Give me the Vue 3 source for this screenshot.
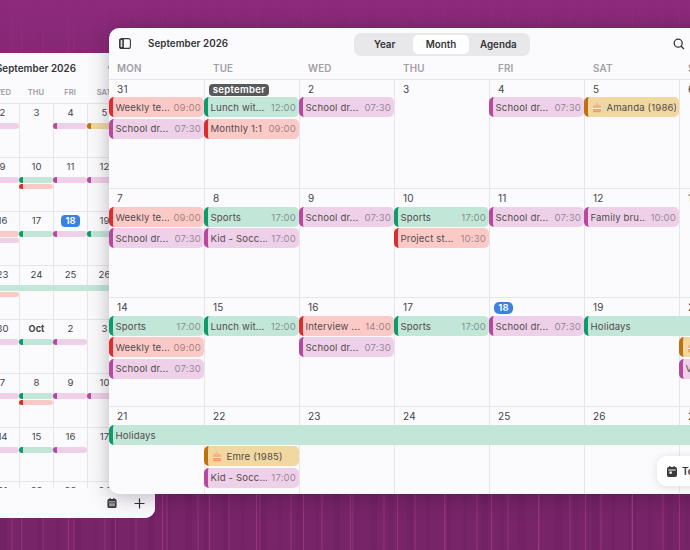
<script setup>
const R = 'red', G = 'green', P = 'pink', Y = 'yellow'
const weekdays = ['MON', 'TUE', 'WED', 'THU', 'FRI', 'SAT', 'SUN']
const weeks = [
  {
    days: ['31', 'september', '2', '3', '4', '5', '6'],
    events: [
      [1, 2, 1, R, 'Weekly te...', '09:00'], [1, 3, 1, P, 'School dr...', '07:30'],
      [2, 2, 1, G, 'Lunch wit...', '12:00'], [2, 3, 1, R, 'Monthly 1:1', '09:00'],
      [3, 2, 1, P, 'School dr...', '07:30'], [5, 2, 1, P, 'School dr...', '07:30'],
      [6, 2, 1, Y, 'Amanda (1986)', '']
    ]
  },
  {
    days: ['7', '8', '9', '10', '11', '12', '13'],
    events: [
      [1, 2, 1, R, 'Weekly te...', '09:00'], [1, 3, 1, P, 'School dr...', '07:30'],
      [2, 2, 1, G, 'Sports', '17:00'], [2, 3, 1, P, 'Kid - Socc...', '17:00'],
      [3, 2, 1, P, 'School dr...', '07:30'], [4, 2, 1, G, 'Sports', '17:00'],
      [4, 3, 1, R, 'Project st...', '10:30'], [5, 2, 1, P, 'School dr...', '07:30'],
      [6, 2, 1, P, 'Family bru...', '10:00']
    ]
  },
  {
    days: ['14', '15', '16', '17', '18', '19', '20'],
    events: [
      [1, 2, 1, G, 'Sports', '17:00'], [1, 3, 1, R, 'Weekly te...', '09:00'], [1, 4, 1, P, 'School dr...', '07:30'],
      [2, 2, 1, G, 'Lunch wit...', '12:00'], [3, 2, 1, R, 'Interview ...', '14:00'], [3, 3, 1, P, 'School dr...', '07:30'],
      [4, 2, 1, G, 'Sports', '17:00'], [5, 2, 1, P, 'School dr...', '07:30'], [6, 2, 2, G, 'Holidays', ''],
      [7, 3, 1, Y, 'Jan (1990)', ''], [7, 4, 1, P, 'Vet', '']
    ]
  },
  {
    days: ['21', '22', '23', '24', '25', '26', '27'],
    events: [
      [1, 2, 7, G, 'Holidays', ''], [2, 3, 1, Y, 'Emre (1985)', ''], [2, 4, 1, P, 'Kid - Socc...', '17:00']
    ]
  }
].map(w => ({
  days: w.days,
  events: w.events.map(([col, row, span, color, title, time]) => ({ col, row, span, color, title, time }))
}))

const miniWeeks = [
  { days: ['31', '1', '2', '3', '4', '5', '6'], bars: [[3, 2, 1, P], [5, 2, 1, P], [6, 2, 1, Y]] },
  { days: ['7', '8', '9', '10', '11', '12', '13'], bars: [[3, 2, 1, P], [4, 2, 1, G], [4, 3, 1, R], [5, 2, 1, P], [6, 2, 1, P]] },
  { days: ['14', '15', '16', '17', '18', '19', '20'], bars: [[3, 2, 1, R], [3, 3, 1, P], [4, 2, 1, G], [5, 2, 1, P], [6, 2, 2, G]] },
  { days: ['21', '22', '23', '24', '25', '26', '27'], bars: [[1, 2, 7, G, true], [3, 3, 1, R]] },
  { days: ['28', '29', '30', 'Oct', '2', '3', '4'], bars: [[3, 2, 1, P], [4, 2, 1, G], [5, 2, 1, P]] },
  { days: ['5', '6', '7', '8', '9', '10', '11'], bars: [[3, 2, 1, P], [4, 2, 1, G], [4, 3, 1, R], [5, 2, 1, P], [6, 2, 1, P]] },
  { days: ['12', '13', '14', '15', '16', '17', '18'], bars: [[3, 2, 1, P], [4, 2, 1, G], [5, 2, 1, P]] },
  { days: ['19', '20', '21', '22', '23', '24', '25'], bars: [] }
].map(w => ({
  days: w.days,
  bars: w.bars.map(([col, row, span, color, plain]) => ({ col, row, span, color, plain }))
}))
</script>

<template>
  <div class="desktop">
    <section class="win mini">
      <header class="mini-head">
        <span></span>
        <strong class="title">September 2026</strong>
        <span class="mini-tools">
          <svg width="12" height="12" viewBox="0 0 12 12" fill="none" stroke="#333" stroke-width="1.4"><circle cx="5.2" cy="5.2" r="4"/><path d="M8.2 8.2 11 11"/></svg>
        </span>
      </header>
      <div class="mini-days">
        <span v-for="d in weekdays" :key="d">{{ d }}</span>
      </div>
      <div class="mini-body">
        <div v-for="(w, i) in miniWeeks" :key="i" class="mini-week">
          <div v-for="(d, j) in w.days" :key="j" class="mini-cell" :style="{ gridColumn: j + 1 }">
            <span class="mini-num" :class="{ today: d === '18' && i === 2 && j === 4, oct: d === 'Oct' }">{{ d }}</span>
          </div>
          <i
            v-for="(b, k) in w.bars"
            :key="'b' + k"
            class="bar"
            :class="[b.color, { plain: b.plain }]"
            :style="{ gridColumn: b.col + ' / span ' + b.span, gridRow: b.row }"
          ></i>
        </div>
      </div>
      <footer class="mini-foot">
        <svg width="10" height="10" viewBox="0 0 12 12"><path fill="#3a3a3c" d="M3 0h1.4v1.2h3.2V0H9v1.2h.6A1.9 1.9 0 0 1 11.5 3v7a1.9 1.9 0 0 1-1.9 2H2.4A1.9 1.9 0 0 1 .5 10V3a1.9 1.9 0 0 1 1.9-1.8H3z"/><path fill="#fff" d="M2 4.2h8v.9H2zM3 6.4h1.2v3.4H3zM5.4 6.4h1.2v3.4H5.4zM7.8 6.4H9v3.4H7.8z"/></svg>
        <svg width="11" height="11" viewBox="0 0 11 11" stroke="#333" stroke-width="1.2"><path d="M5.5.5v10M.5 5.5h10"/></svg>
      </footer>
    </section>

    <section class="win main">
      <header class="main-head">
        <svg class="side-icon" width="12" height="11" viewBox="0 0 12 11" fill="none" stroke="#3a3a3c" stroke-width="1.1"><rect x=".6" y=".6" width="10.8" height="9.8" rx="2"/><path fill="#3a3a3c" d="M1 1.5h3v8H1z" fill-opacity=".15"/><path d="M4.3.6v9.8"/></svg>
        <strong class="title">September 2026</strong>
        <nav class="seg">
          <span class="tab year">Year</span>
          <span class="tab on">Month</span>
          <span class="tab agenda">Agenda</span>
        </nav>
        <svg class="search" width="12" height="12" viewBox="0 0 12 12" fill="none" stroke="#333" stroke-width="1.3"><circle cx="5.2" cy="5.2" r="4"/><path d="M8.2 8.2 11 11"/></svg>
      </header>
      <div class="main-days">
        <span v-for="d in weekdays" :key="d">{{ d }}</span>
      </div>
      <div v-for="(w, i) in weeks" :key="i" class="week">
        <div v-for="(d, j) in w.days" :key="j" class="cell" :style="{ gridColumn: j + 1 }">
          <span v-if="d === 'september'" class="badge month-badge">{{ d }}</span>
          <span v-else-if="d === '18'" class="badge today-badge">{{ d }}</span>
          <span v-else class="num">{{ d }}</span>
        </div>
        <div
          v-for="(e, k) in w.events"
          :key="'e' + k"
          class="event"
          :class="e.color"
          :style="{ gridColumn: e.col + ' / span ' + e.span, gridRow: e.row }"
        >
          <svg v-if="e.color === 'yellow'" class="cake" width="10" height="11" viewBox="0 0 10 11">
            <path fill="#f39a55" d="M5 .6c.6.6.6 1.2 0 1.7-.6-.5-.6-1.1 0-1.7z"/>
            <path fill="#f5b27c" d="M1 5.2a4 2.6 0 0 1 8 0v1H1z"/>
            <path fill="#fdf1df" d="M.5 5.9h9v1.2h-9z"/>
            <path fill="#f39a55" d="M1 7.1h8l-.4 2.7a.6.6 0 0 1-.6.5H2a.6.6 0 0 1-.6-.5z"/>
            <path fill="#fdf1df" d="M2.2 8.4h5.6v.6H2.2z" fill-opacity=".6"/>
          </svg>
          <span class="ev-title">{{ e.title }}</span>
          <span v-if="e.time" class="ev-time">{{ e.time }}</span>
        </div>
      </div>
      <button class="today-btn">
        <svg width="10" height="11" viewBox="0 0 10 11"><path fill="#3a3a3c" d="M2.2 0h1.2v1h3.2V0h1.2v1h.4A1.8 1.8 0 0 1 10 2.8v6.4A1.8 1.8 0 0 1 8.2 11H1.8A1.8 1.8 0 0 1 0 9.2V2.8A1.8 1.8 0 0 1 1.8 1h.4z"/><path fill="#fff" d="M1.3 3.6h7.4v.8H1.3zM2.4 5.4h2.4v2.4H2.4z"/></svg>
        Today
      </button>
    </section>
  </div>
</template>

<style scoped>
.desktop {
  position: relative;
  width: 690px;
  height: 550px;
  overflow: hidden;
  font-family: Inter, "Liberation Sans", sans-serif;
  background:
    linear-gradient(180deg, #8d2a7b 0%, rgba(141, 42, 123, .7) 9%, rgba(125, 38, 110, .1) 88%),
    repeating-linear-gradient(90deg, transparent 0 21px, rgba(226, 84, 190, .34) 21px 22px, transparent 22px 47px),
    repeating-linear-gradient(90deg, transparent 0 11px, rgba(226, 84, 190, .15) 11px 13px, transparent 13px 31px),
    repeating-linear-gradient(90deg, rgba(40, 0, 40, .07) 0 7px, transparent 7px 19px, rgba(40, 0, 40, .05) 19px 23px, transparent 23px 37px),
    #772468;
}
.win {
  position: absolute;
  background: #fbfbfd;
  overflow: hidden;
}
.main {
  left: 109px;
  top: 28px;
  width: 665px;
  height: 466px;
  border-radius: 10px;
  box-shadow: 0 3px 22px rgba(30, 0, 30, .28);
}
.mini {
  left: -83px;
  top: 53px;
  width: 238px;
  height: 465px;
  border-radius: 10px;
  display: flex;
  flex-direction: column;
}
.title {
  font-size: 9.8px;
  font-weight: 600;
  letter-spacing: .05px;
  color: #333336;
  white-space: nowrap;
}
.main-head {
  height: 31px;
  display: flex;
  align-items: center;
  padding-left: 10px;
}
.side-icon { flex: none; }
.main-head .title { margin-left: 17px; width: 206px; }
.seg {
  flex: none;
  display: flex;
  align-items: center;
  width: 176px;
  height: 23px;
  padding: 0 2px;
  box-sizing: border-box;
  border-radius: 7px;
  background: #e8e8ea;
  margin-top: 1px;
}
.tab {
  font-size: 9.8px;
  font-weight: 600;
  color: #333336;
  text-align: center;
  height: 19px;
  line-height: 19px;
  border-radius: 5px;
}
.tab.year { width: 58px; }
.tab.on { width: 56px; background: #fff; }
.tab.agenda { width: 60px; }
.search { margin-left: 143px; flex: none; margin-top: 1px; }
.main-days {
  display: grid;
  grid-template-columns: repeat(7, 95px);
  height: 20px;
  box-sizing: border-box;
  line-height: 19px;
  font-size: 9.8px;
  font-weight: 600;
  color: #a0a0a4;
  letter-spacing: .2px;
}
.main-days span { padding-left: 9px; }
.main-days span:first-child { padding-left: 8px; }
.week {
  display: grid;
  grid-template-columns: repeat(7, 95px);
  grid-template-rows: 18px repeat(3, 21.3px) 27px;
  height: 109px;
  box-sizing: border-box;
  border-top: 1px solid #e6e6e9;
}
.main-days + .week { grid-template-rows: 17.4px repeat(3, 21.3px) 27.6px; }
.cell {
  grid-row: 1 / -1;
  border-left: 1px solid #e6e6e9;
  padding: 3px 0 0 8px;
  font-size: 10px;
  line-height: 13px;
  color: #444448;
  letter-spacing: .2px;
}
.cell:first-child { border-left: 0; padding-left: 8px; }
.badge {
  display: inline-block;
  height: 12px;
  line-height: 12px;
  border-radius: 4px;
  color: #fff;
  font-size: 9.6px;
  font-weight: 600;
  vertical-align: top;
  margin-top: 1px;
}
.month-badge {
  background: #59595c;
  margin-left: -4px;
  width: 60px;
  box-sizing: border-box;
  text-align: center;
  letter-spacing: .3px;
}
.today-badge {
  background: #3b82e0;
  width: 19px;
  text-align: center;
  margin-left: -4px;
  border-radius: 5px;
}
.event {
  height: 20px;
  display: flex;
  align-items: center;
  gap: 4px;
  border-radius: 5px;
  border-left-width: 4px;
  border-left-style: solid;
  padding: 0 3px 0 2.5px;
  min-width: 0;
  overflow: hidden;
  font-size: 9.6px;
  white-space: nowrap;
  color: #544a4e;
  letter-spacing: .15px;
}
.ev-title { flex: 1; min-width: 0; overflow: hidden; }
.ev-time { flex: none; color: rgba(60, 50, 60, .5); }
.cake { flex: none; margin: 0 1px 0 1px; }
.bar {
  display: block;
  height: 5.5px;
  border-radius: 3px;
  border-left-width: 4px;
  border-left-style: solid;
  min-width: 0;
}
.red { background: #fccac6; border-color: #dc2d2e; }
.green { background: #c2e6d8; border-color: #0f9a6a; }
.pink { background: #eed1e8; border-color: #b6489f; }
.yellow { background: #f0d8a0; border-color: #bf7110; }
.bar.plain { border-left: 0; border-radius: 0; }

.today-btn {
  position: absolute;
  left: 548px;
  top: 428px;
  height: 30px;
  width: 80px;
  border: 0;
  border-radius: 9px;
  background: #fff;
  box-shadow: 0 1px 8px rgba(0, 0, 0, .12);
  display: flex;
  align-items: center;
  gap: 5px;
  padding: 0 10px;
  font: 600 10px Inter, sans-serif;
  color: #333336;
}

.mini-head {
  height: 30px;
  flex: none;
  display: grid;
  grid-template-columns: 1fr auto 1fr;
  align-items: center;
}
.mini-tools { padding-left: 32px; display: flex; }
.mini-days {
  flex: none;
  display: grid;
  grid-template-columns: repeat(7, 34px);
  height: 20px;
  line-height: 20px;
  font-size: 7.6px;
  font-weight: 600;
  text-align: center;
  color: #9a9a9e;
}
.mini-body {
  height: 385px;
  flex: none;
  overflow: hidden;
}
.mini-week {
  display: grid;
  grid-template-columns: repeat(7, 34px);
  grid-template-rows: 19px 6.5px 6.5px 1fr;
  height: 54px;
  box-sizing: border-box;
  border-top: 1px solid #e6e6e9;
}
.mini-cell {
  grid-row: 1 / -1;
  border-left: 1px solid #e6e6e9;
  text-align: center;
  font-size: 9.6px;
  line-height: 12px;
  padding-top: 3px;
  color: #444448;
}
.mini-cell:first-child { border-left: 0; }
.mini-num { display: inline-block; min-width: 19px; }
.mini-num.today {
  background: #3b82e0;
  color: #fff;
  font-weight: 600;
  border-radius: 4px;
}
.mini-num.oct { font-weight: 700; font-size: 9.2px; }
.mini-foot {
  flex: 1;
  background: #fbfbfd;
  display: flex;
  align-items: center;
  justify-content: flex-end;
  gap: 17px;
  padding-right: 10px;
}
</style>
